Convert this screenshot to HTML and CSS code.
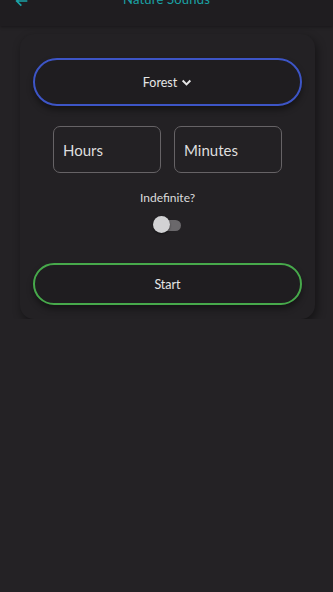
FILE: index.html
```html
<!DOCTYPE html>
<html lang="en">
<head>
    <meta charset="UTF-8">
    <meta name="viewport" content="width=device-width, initial-scale=1.0">
    <title>Nature Sounds</title>
    <link rel="stylesheet" href="styles.css">
</head>
<body>
    <header class="app-bar">
        <svg class="back-icon" width="16" height="16" viewBox="0 0 24 24">
            <path d="M20 12H5M11 5l-7 7 7 7" fill="none" stroke="#1ba2a6" stroke-width="2.6"/>
        </svg>
        <h1 class="app-title">Nature Sounds</h1>
    </header>

    <main class="card">
        <button class="pill pill-blue">Forest
            <svg width="11" height="11" viewBox="0 0 10 10">
                <path d="M1.5 3.2L5 6.7 8.5 3.2" fill="none" stroke="#e6e6e6" stroke-width="1.8"/>
            </svg>
        </button>

        <div class="time-row">
            <div class="time-field">Hours</div>
            <div class="time-field">Minutes</div>
        </div>

        <div class="label">Indefinite?</div>
        <div class="toggle">
            <span class="track"></span>
            <span class="thumb"></span>
        </div>

        <button class="pill pill-green">Start</button>
    </main>
</body>
</html>
```

FILE: styles.css
```css
/* Base */
body {
    margin: 0;
    background: #242225;
    font-family: "Lato", "Noto Sans", sans-serif;
    color: #e2e2e2;
    overflow: hidden;
}

/* App bar, scrolled so the title is cut off */
.app-bar {
    height: 26px;
    background: #1f1d20;
    position: relative;
    box-shadow: 0 1px 3px rgba(0, 0, 0, 0.35);
}

.back-icon {
    position: absolute;
    left: 14px;
    top: -7px;
}

.app-title {
    margin: 0;
    position: absolute;
    top: -9px;
    width: 100%;
    text-align: center;
    font-size: 13px;
    font-weight: 400;
    color: #1ba2a6;
    letter-spacing: 0.2px;
}

/* Card */
.card {
    margin: 8px 18px 0 20px;
    height: 285px;
    box-sizing: border-box;
    padding: 24px 13px 0 13px;
    background: #232124;
    border-radius: 14px;
    box-shadow: 2px 4px 10px rgba(0, 0, 0, 0.45);
    display: flex;
    flex-direction: column;
    align-items: center;
}

.pill {
    width: 100%;
    border-radius: 24px;
    background: #1f1d20;
    color: #e6e6e6;
    font-family: inherit;
    font-size: 12.5px;
    display: flex;
    align-items: center;
    justify-content: center;
    gap: 4px;
    box-shadow: 0 4px 6px rgba(0, 0, 0, 0.4);
}

.pill-blue {
    height: 48px;
    border: 2px solid #3d55c6;
}

.pill-green {
    height: 42px;
    margin-top: 29px;
    border: 2px solid #47a94b;
}

.time-row {
    display: flex;
    gap: 13px;
    margin-top: 20px;
}

.time-field {
    width: 108px;
    height: 47px;
    box-sizing: border-box;
    border: 1px solid #666366;
    border-radius: 7px;
    padding-left: 9px;
    display: flex;
    align-items: center;
    font-size: 15px;
    color: #dedede;
}

.label {
    margin-top: 17px;
    font-size: 12px;
    color: #dcdcdc;
}

.toggle {
    position: relative;
    width: 30px;
    height: 18px;
    margin-top: 11px;
}

.track {
    position: absolute;
    left: 4px;
    top: 4px;
    width: 24px;
    height: 11px;
    border-radius: 6px;
    background: #6a686b;
}

.thumb {
    position: absolute;
    left: 0;
    top: 0;
    width: 17px;
    height: 17px;
    border-radius: 50%;
    background: #d2d2d4;
    box-shadow: 0 1px 2px rgba(0, 0, 0, 0.5);
}
```
